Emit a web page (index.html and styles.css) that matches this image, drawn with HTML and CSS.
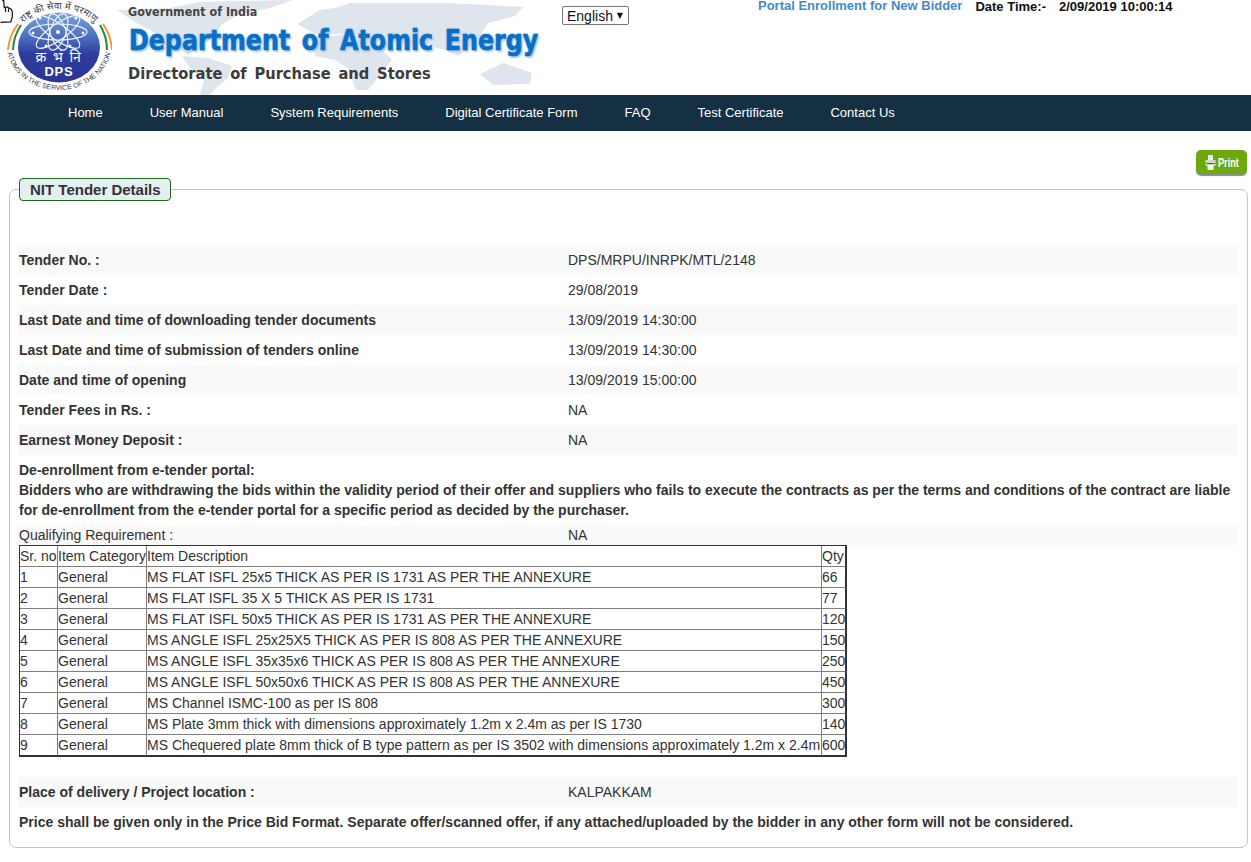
FILE: index.html
```html
<!DOCTYPE html>
<html lang="en">
<head>
<meta charset="utf-8">
<title>NIT Tender Details</title>
<link rel="stylesheet" href="styles.css">
</head>
<body>
<svg class="cursor" width="14" height="24" viewBox="0 0 14 24" aria-hidden="true"><path d="M0 1 L3 0.5 L3.5 8 L6 7 L9 8 L12 10 L12.5 17 L11 22 L1 22.5 L0 21 Z" fill="#fff"/><path d="M2 .5 L3.7 .5 L4.2 7.5 L7 7 L9 8 L11.5 9.5 L12.3 12 L12.3 17 L10.8 21.8 L.5 22.3 M5.5 8 L5.5 12 M8.5 8.5 L8.5 12" fill="none" stroke="#111" stroke-width="1.2"/></svg>
<header class="masthead">
  <svg class="map" width="450" height="95" viewBox="0 0 450 95" aria-hidden="true">
    <g fill="#dfe5ec">
      <path d="M7 10 L60 8 L90 2 L182 0 L160 8 L130 14 L112 24 L105 35 L92 44 L78 55 L60 42 L40 30 L25 22 Z"/>
      <path d="M72 56 L98 58 L122 66 L118 78 L106 88 L100 95 L90 95 L94 80 L80 68 Z"/>
      <path d="M187 24 L210 10 L225 8 L240 3 L335 3 L413 7 L405 16 L378 23 L365 44 L348 56 L335 50 L310 44 L290 44 L280 38 L240 34 L205 34 Z"/>
      <path d="M205 38 L240 34 L262 40 L282 60 L270 75 L258 90 L246 90 L238 68 L225 60 L205 56 Z"/>
      <path d="M370 74 L393 63 L422 73 L420 84 L383 85 Z"/>
    </g>
  </svg>
  <svg class="logo" width="112" height="95" viewBox="0 0 112 95">
    <defs>
      <linearGradient id="globe" x1="0" y1="0" x2="0" y2="1">
        <stop offset="0" stop-color="#7ea4d8"/>
        <stop offset=".35" stop-color="#4a70bd"/>
        <stop offset=".6" stop-color="#2e3c9e"/>
        <stop offset="1" stop-color="#2c3692"/>
      </linearGradient>
      <path id="arcTop" d="M13 46 A46 37 0 0 1 105 46"/>
      <path id="arcBottom" d="M7 46 A52 44 0 0 0 111 46"/>
    </defs>
    <ellipse cx="59" cy="47.500" rx="41" ry="35" fill="url(#globe)"/>
    <g fill="none" stroke="#eef3fb" stroke-width="1.200">
      <ellipse cx="58" cy="32" rx="29" ry="8"/>
      <ellipse cx="58" cy="32" rx="26" ry="8" transform="rotate(35 58 32)"/>
      <ellipse cx="58" cy="32" rx="19" ry="8" transform="rotate(70 58 32)"/>
      <ellipse cx="58" cy="32" rx="19" ry="8" transform="rotate(110 58 32)"/>
      <ellipse cx="58" cy="32" rx="26" ry="8" transform="rotate(145 58 32)"/>
    </g>
    <g fill="#fff"><circle cx="58" cy="32" r="2"/><circle cx="33" cy="33" r="1.500"/><circle cx="83" cy="33" r="1.500"/><circle cx="40" cy="18" r="1.500"/><circle cx="76" cy="18" r="1.500"/><circle cx="46" cy="46" r="1.500"/><circle cx="70" cy="46" r="1.500"/></g>
    <path d="M18 24 A50 50 0 0 0 8 50" fill="none" stroke="#f09a37" stroke-width="2"/>
    <path d="M21 25 A47 47 0 0 0 13 50" fill="none" stroke="#1f8a3a" stroke-width="2"/>
    <path d="M103 24 A50 50 0 0 1 112 50" fill="none" stroke="#f09a37" stroke-width="2"/>
    <path d="M100 25 A47 47 0 0 1 107 50" fill="none" stroke="#1f8a3a" stroke-width="2"/>
    <text class="logo-arc logo-hi"><textPath href="#arcTop" startOffset="50%" text-anchor="middle">राष्ट्र की सेवा में परमाणु</textPath></text>
    <text class="logo-arc logo-en"><textPath href="#arcBottom" startOffset="50%" text-anchor="middle">ATOMS IN THE SERVICE OF THE NATION</textPath></text>
    <text class="logo-hi-mid" x="59" y="62" text-anchor="middle">क्र भं नि</text>
    <text class="logo-dps" x="59" y="76" text-anchor="middle">DPS</text>
  </svg>
  <div class="brand">
    <div class="brand-gov"><span>Government of India</span></div>
    <div class="brand-dept"><span>Department of Atomic Energy</span></div>
    <div class="brand-dir"><span>Directorate of Purchase and Stores</span></div>
  </div>
  <div class="lang-box"><select class="lang"><option>English</option></select></div>
  <div class="portal-link">Portal Enrollment for New Bidder</div>
  <div class="clock-label">Date Time:-</div>
  <div class="clock-value">2/09/2019 10:00:14</div>
</header>
<nav class="menu">
  <a>Home</a><a>User Manual</a><a>System Requirements</a><a>Digital Certificate Form</a><a>FAQ</a><a>Test Certificate</a><a>Contact Us</a>
</nav>
<div class="toolbar">
  <button class="print" type="button">
    <svg width="11" height="17" viewBox="0 0 11 17" aria-hidden="true"><path d="M3 1h5v5H3z" fill="#e8efe0"/><path d="M.5 6h10v6H.5z" fill="#cfd8c6"/><path d="M1.500 9h8v1h-8z" fill="#4d5846"/><path d="M2.500 11h6v5h-6z" fill="#f3f6ef"/></svg>
    <span>Print</span>
  </button>
</div>
<fieldset class="panel">
  <legend class="panel-title">NIT Tender Details</legend>
  <div class="details">
    <div class="row"><b>Tender No. :</b><span>DPS/MRPU/INRPK/MTL/2148</span></div>
    <div class="row"><b>Tender Date :</b><span>29/08/2019</span></div>
    <div class="row"><b>Last Date and time of downloading tender documents</b><span>13/09/2019 14:30:00</span></div>
    <div class="row"><b>Last Date and time of submission of tenders online</b><span>13/09/2019 14:30:00</span></div>
    <div class="row"><b>Date and time of opening</b><span>13/09/2019 15:00:00</span></div>
    <div class="row"><b>Tender Fees in Rs. :</b><span>NA</span></div>
    <div class="row"><b>Earnest Money Deposit :</b><span>NA</span></div>
  </div>
  <p class="notice"><b>De-enrollment from e-tender portal:<br>Bidders who are withdrawing the bids within the validity period of their offer and suppliers who fails to execute the contracts as per the terms and conditions of the contract are liable for de-enrollment from the e-tender portal for a specific period as decided by the purchaser.</b></p>
  <div class="row row-short"><span>Qualifying Requirement :</span><span>NA</span></div>
  <table class="items">
    <colgroup><col class="c-sr"><col class="c-cat"><col class="c-desc"><col class="c-qty"></colgroup>
    <tr><td>Sr. no</td><td>Item Category</td><td>Item Description</td><td>Qty</td></tr>
    <tr><td>1</td><td>General</td><td>MS FLAT ISFL 25x5 THICK AS PER IS 1731 AS PER THE ANNEXURE</td><td>66</td></tr>
    <tr><td>2</td><td>General</td><td>MS FLAT ISFL 35 X 5 THICK AS PER IS 1731</td><td>77</td></tr>
    <tr><td>3</td><td>General</td><td>MS FLAT ISFL 50x5 THICK AS PER IS 1731 AS PER THE ANNEXURE</td><td>120</td></tr>
    <tr><td>4</td><td>General</td><td>MS ANGLE ISFL 25x25X5 THICK AS PER IS 808 AS PER THE ANNEXURE</td><td>150</td></tr>
    <tr><td>5</td><td>General</td><td>MS ANGLE ISFL 35x35x6 THICK AS PER IS 808 AS PER THE ANNEXURE</td><td>250</td></tr>
    <tr><td>6</td><td>General</td><td>MS ANGLE ISFL 50x50x6 THICK AS PER IS 808 AS PER THE ANNEXURE</td><td>450</td></tr>
    <tr><td>7</td><td>General</td><td>MS Channel ISMC-100 as per IS 808</td><td>300</td></tr>
    <tr><td>8</td><td>General</td><td>MS Plate 3mm thick with dimensions approximately 1.2m x 2.4m as per IS 1730</td><td>140</td></tr>
    <tr><td>9</td><td>General</td><td>MS Chequered plate 8mm thick of B type pattern as per IS 3502 with dimensions approximately 1.2m x 2.4m</td><td>600</td></tr>
  </table>
  <div class="row row-delivery"><b>Place of delivery / Project location :</b><span>KALPAKKAM</span></div>
  <p class="price-note"><b>Price shall be given only in the Price Bid Format. Separate offer/scanned offer, if any attached/uploaded by the bidder in any other form will not be considered.</b></p>
</fieldset>
</body>
</html>
```
FILE: styles.css
```css
* { box-sizing: border-box; }
html, body { margin: 0; padding: 0; }
body {
  position: relative;
  width: 1251px;
  height: 862px;
  overflow: hidden;
  background: #fff;
  color: #333;
  font: 14px/20px "Liberation Sans", Arial, sans-serif;
}
.cursor { position: absolute; left: 0; top: 0; z-index: 5; }
.masthead {
  position: relative;
  display: flex;
  align-items: flex-start;
  height: 95px;
  overflow: hidden;
}
.map { position: absolute; left: 110px; top: 0; }
.logo { position: relative; flex: none; width: 127px; padding-right: 15px; }
.logo-arc { fill: #3a3a4a; }
.logo-hi { font: 9.5px "Noto Sans", "DejaVu Sans", sans-serif; letter-spacing: .2px; }
.logo-en { font: 7px "Liberation Sans", sans-serif; }
.logo-hi-mid { fill: #fff; font: 14px "Noto Sans", "DejaVu Sans", sans-serif; letter-spacing: 1.500px; }
.logo-dps { fill: #fff; font: bold 13px "Liberation Sans", sans-serif; letter-spacing: .8px; }
.brand {
  position: relative;
  flex: none;
  width: 435px;
  padding: 4px 0 0 1px;
  font-family: "DejaVu Sans", sans-serif;
  font-weight: bold;
  white-space: nowrap;
}
.brand span { display: inline-block; transform-origin: left center; }
.brand-gov { height: 16px; font-size: 12px; line-height: 16px; color: #444; }
.brand-gov span { transform: scaleX(.93); }
.brand-dept {
  height: 36px;
  margin-top: 2px;
  padding-left: 1px;
  font-size: 29px;
  line-height: 36px;
  color: #0a6ec4;
  word-spacing: 4px;
}
.brand-dept span {
  transform: scaleX(.82);
  -webkit-text-stroke: .5px #0a6ec4;
  text-shadow: 0 0 2px #8fc0ec, 0 0 2px #8fc0ec, 2px 2px 2px #a9c9e8;
}
.brand-dir { height: 22px; margin-top: 5px; font-size: 16.5px; line-height: 22px; color: #3c3c3c; word-spacing: 3px; }
.brand-dir span { transform: scaleX(.89); }
.lang-box { position: relative; flex: none; width: 67px; height: 19px; margin-top: 6px; }
.lang-box::after {
  content: "▼";
  position: absolute;
  right: 6px;
  top: 0;
  color: #111;
  font: 8px/19px "DejaVu Sans", sans-serif;
  pointer-events: none;
}
.lang {
  display: block;
  width: 100%;
  height: 100%;
  padding: 0 0 0 4px;
  appearance: none;
  background: #fff;
  border: 1px solid #777;
  border-radius: 2px;
  color: #111;
  font: 14px "Liberation Sans", sans-serif;
}
.portal-link { position: relative; flex: none; margin-left: 129px; color: #428bca; font-weight: bold; font-size: 13px; line-height: 11px; }
.clock-label { position: relative; flex: none; margin-left: 13px; color: #111; font-weight: bold; font-size: 13px; line-height: 13px; }
.clock-value { position: relative; flex: none; margin-left: 13px; color: #111; font-weight: bold; font-size: 13px; line-height: 13px; }
.menu {
  display: flex;
  gap: 47px;
  height: 36px;
  padding-left: 68px;
  background: #152f43;
  font-size: 13px;
  line-height: 35px;
}
.menu a { color: #fff; }
.toolbar { display: flex; justify-content: flex-end; height: 47px; padding: 19px 4px 0 0; }
.print {
  display: flex;
  align-items: center;
  gap: 2px;
  width: 51px;
  height: 24px;
  padding: 0 0 0 9px;
  border: 0;
  border-radius: 5px;
  background: #6ca90d;
  box-shadow: 0 2px 1px #8a8a8a;
  color: #fff;
  font: bold 13.5px "Liberation Sans", sans-serif;
}
.print svg { flex: none; }
.print span { flex: none; width: 24px; transform: scaleX(.68); transform-origin: left; }
.panel {
  min-width: 0;
  width: 1239px;
  height: 670px;
  margin: 0 0 0 9px;
  padding: 44px 9px 0 8px;
  border: 1px solid #c4c4c4;
  border-radius: 7px;
}
.panel-title {
  margin: 0 13px 0 1px;
  padding: 0 10px;
  width: 152px;
  height: 23px;
  border: 1px solid #1a6a1a;
  border-radius: 4px;
  background: #e3eff1;
  color: #333;
  font-size: 15px;
  font-weight: bold;
  line-height: 22px;
  white-space: nowrap;
}
.row {
  display: grid;
  grid-template-columns: 549px 1fr;
  height: 30px;
  padding-left: 1px;
  line-height: 30px;
}
.details .row:nth-child(odd) { background: #f9f9f9; }
.notice { margin: 5px 0 5px; padding-left: 1px; }
.row-short { height: 20px; line-height: 20px; background: #f9f9f9; }
.items {
  table-layout: fixed;
  width: 828px;
  margin-left: 1px;
  border-collapse: separate;
  border-spacing: 0;
  border: 1px solid #333;
  white-space: nowrap;
}
.c-sr { width: 38px; }
.c-cat { width: 89px; }
.c-desc { width: 675px; }
.c-qty { width: 24px; }
.items td {
  height: 21px;
  padding: 0;
  overflow: hidden;
  border-right: 1px solid #808080;
  border-bottom: 1px solid #808080;
  line-height: 20px;
}
.items td:last-child { border-right-color: #333; }
.items tr:last-child td { border-bottom-color: #333; }
.row-delivery { margin-top: 20px; background: #f9f9f9; }
.price-note { margin: 5px 0 0; padding-left: 1px; }
```
